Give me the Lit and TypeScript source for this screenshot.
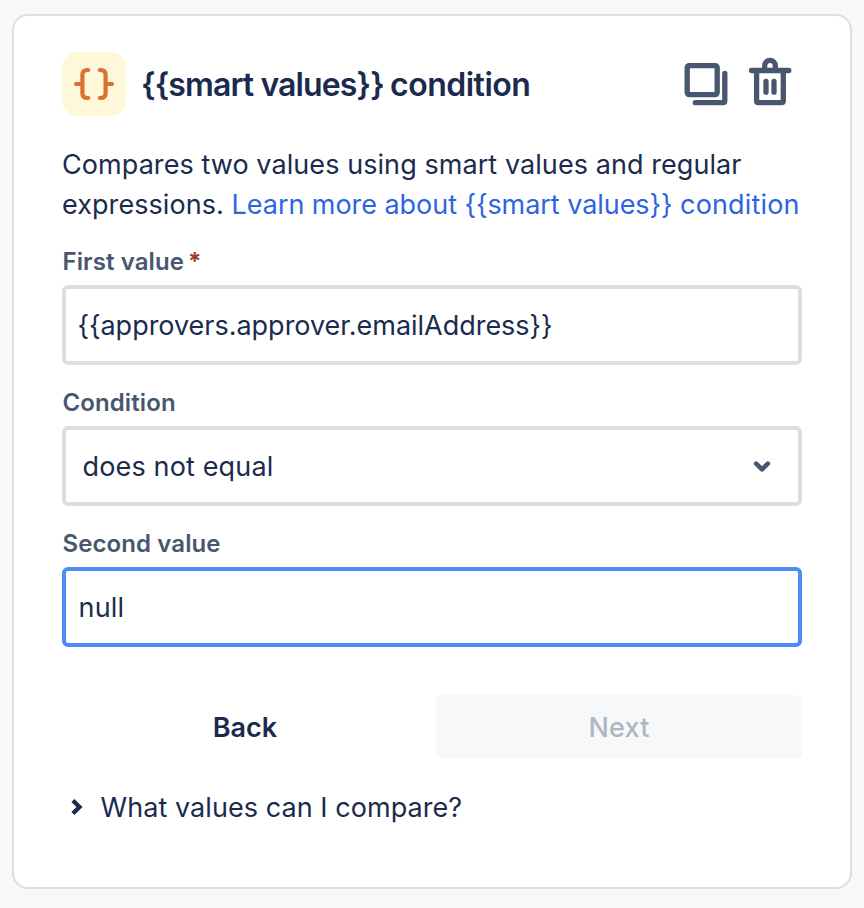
import { LitElement, html, css } from "lit";

class AppRoot extends LitElement {
  static styles = css`
    :host { display: block; box-sizing: border-box; height: 908px; background: #f7f8fa; padding: 14px 12px 19px; font-family: Inter, "Liberation Sans", sans-serif; color: #1b2b4e; font-size: 27px; }
    * { box-sizing: border-box; }
    .card { height: 875px; border: 2px solid #dcdee2; border-radius: 16px; background: #fff; padding: 36px 48px; display: flex; flex-direction: column; }
    header { display: flex; align-items: center; height: 64px; }
    h1 { margin: 0 0 0 15px; padding-top: 2px; font-size: 32px; line-height: 40px; font-weight: 600; letter-spacing: -0.88px; flex: 1; white-space: nowrap; }
    .word { letter-spacing: -0.5px; margin-left: -1px; }
    svg { display: block; flex: none; stroke-linecap: round; }
    .badge { width: 64px; height: 64px; border-radius: 16px; background: #fff7d9; }
    .copy { margin-right: 16px; }
    .trash { margin-right: 8px; }
    .desc { margin: 29px 0 0; line-height: 40px; white-space: nowrap; letter-spacing: 0.07px; }
    .link { color: #2d65e0; letter-spacing: -0.05px; }
    .link .end { letter-spacing: 0.17px; }
    .label { margin: 22px 0 7px 0.5px; height: 32px; line-height: 32px; font-size: 24px; font-weight: 600; color: #48566f; letter-spacing: 0.1px; }
    .first { margin-top: 21px; }
    .req { color: #a6352a; margin-left: 4px; font-weight: 700; }
    .field { height: 80px; border: 4px solid #dddee4; border-radius: 6px; padding: 0 12px; display: flex; align-items: center; justify-content: space-between; }
    .tight { letter-spacing: -0.02px; padding-left: 11.5px; }
    .select { padding: 0 12px 0 16.5px; letter-spacing: 0.15px; }
    .focus { border-color: #4f8af8; letter-spacing: 0.2px; padding-left: 12.5px; }
    .buttons { display: flex; gap: 8px; margin-top: 48px; }
    .btn { flex: 1; height: 64px; line-height: 66px; text-align: center; font-weight: 600; border-radius: 6px; }
    .off { background: #f7f8fa; color: #b0b6c2; font-weight: 550; letter-spacing: 0.2px; }
    .more { display: flex; align-items: center; gap: 8.5px; margin-top: 29px; line-height: 40px; letter-spacing: 0.06px; }
    .arrow { margin-top: -2px; stroke-linecap: butt; }
  `;

  render() {
    return html`<main class="card">
      <header>
        <svg class="badge" viewBox="0 0 64 64" fill="none" stroke="#d9722e" stroke-width="4.2"><path d="M26.2 18h-.8q-5 0-5 5v18q0 5 5 5h.8M14 32h6M37.8 18h.8q5 0 5 5v18q0 5-5 5h-.8M44 32h6"/></svg>
        <h1>{{smart values}} <span class="word">condition</span></h1>
        <svg class="copy" width="48" height="48" viewBox="0 0 48 48" fill="none" stroke="#48566f" stroke-width="5.3"><rect x="5.2" y="5.6" width="30" height="29" rx="2"/><path d="M42.8 13.3v27.4q0 2-2 2H13.3"/></svg>
        <svg class="trash" width="48" height="56" viewBox="0 0 48 56" fill="none" stroke="#48566f" stroke-width="5.3"><path d="M5.5 14.5h37.3M10.6 15v29.7q0 2 2 2h22.7q2 0 2-2V15M18.7 14v-4.3a5.3 5.3 0 0 1 10.6 0V14M20 25.5v10.7M28 25.5v10.7"/></svg>
      </header>
      <p class="desc">Compares two values using smart values and regular<br />expressions. <span class="link">Learn more about {{smart values}} <span class="end">condition</span></span></p>
      <div class="label first">First value<span class="req">*</span></div>
      <div class="field tight">{{approvers.approver.emailAddress}}</div>
      <div class="label">Condition</div>
      <div class="field select">does not equal<svg width="48" height="48" viewBox="0 0 48 48" fill="none" stroke="#48566f" stroke-width="4.6" stroke-linejoin="round"><path d="M18.2 21.7l5.8 5.7 5.8-5.7"/></svg></div>
      <div class="label">Second value</div>
      <div class="field focus">null</div>
      <div class="buttons"><div class="btn">Back</div><div class="btn off">Next</div></div>
      <div class="more"><svg class="arrow" width="30" height="40" viewBox="0 0 30 40" fill="none" stroke="#1b2b4e" stroke-width="4.3"><path d="M10.9 13.4l6.6 6.6-6.6 6.6"/></svg>What values can I compare?</div>
    </main>`;
  }
}
customElements.define("app-root", AppRoot);
